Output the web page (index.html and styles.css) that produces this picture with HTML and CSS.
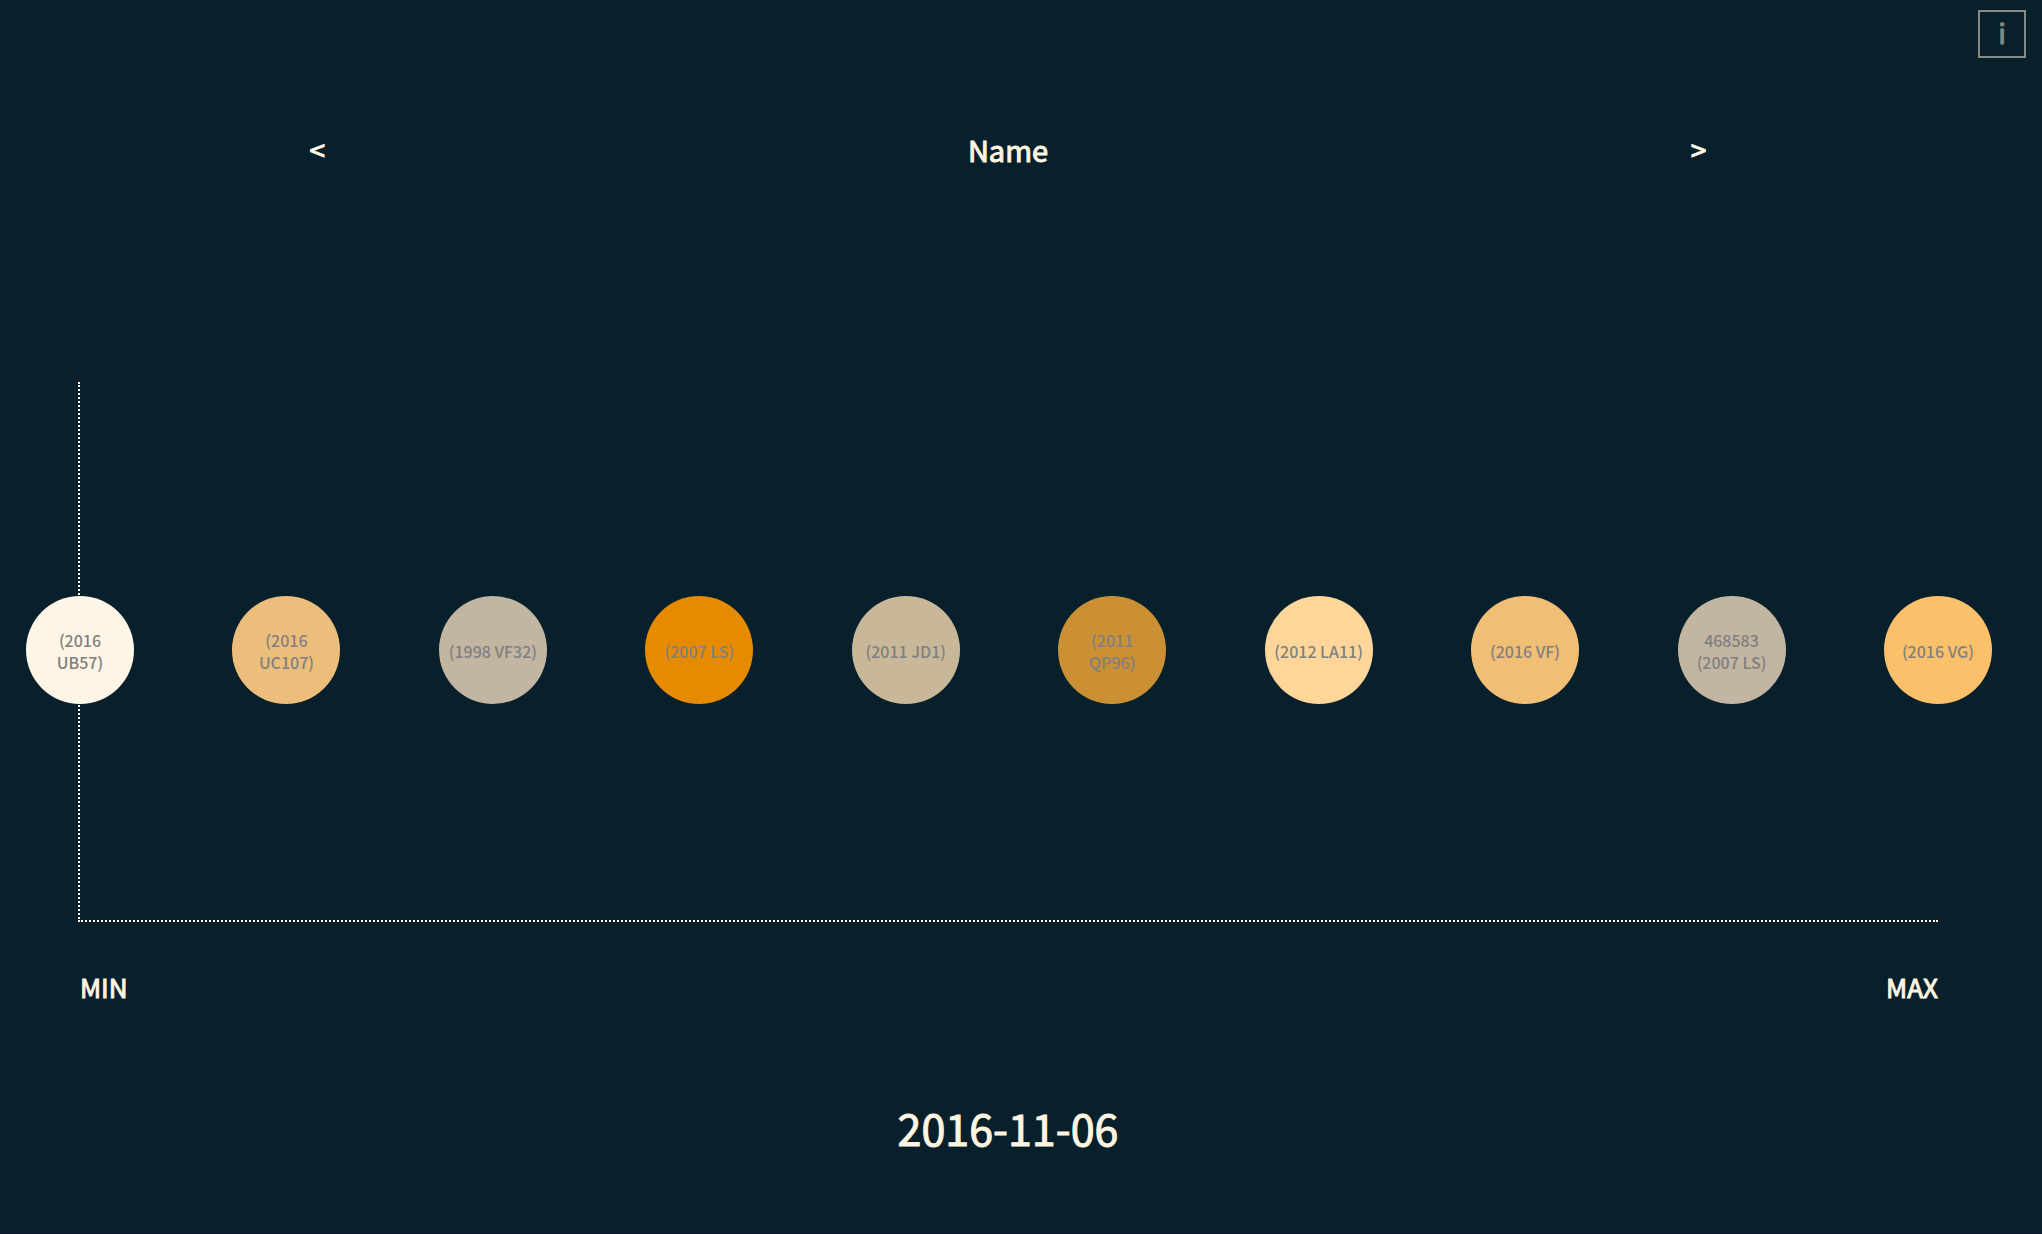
FILE: index.html
```html
<!DOCTYPE html>
<html lang="en">
<head>
<meta charset="utf-8">
<title>Near-Earth asteroids</title>
<link rel="stylesheet" href="styles.css">
</head>
<body>
<header class="topbar">
  <button class="info" type="button">i</button>
</header>
<main class="page">
  <nav class="sorter">
    <button class="arrow" type="button">&lt;</button>
    <h1 class="sorter-title">Name</h1>
    <button class="arrow" type="button">&gt;</button>
  </nav>
  <section class="chart">
    <div class="plot">
      <ul class="asteroids">
        <li class="asteroid cream"><span>(2016 UB57)</span></li>
        <li class="asteroid sand"><span>(2016 UC107)</span></li>
        <li class="asteroid stone"><span>(1998 VF32)</span></li>
        <li class="asteroid orange"><span>(2007 LS)</span></li>
        <li class="asteroid khaki"><span>(2011 JD1)</span></li>
        <li class="asteroid bronze"><span>(2011 QP96)</span></li>
        <li class="asteroid peach"><span>(2012 LA11)</span></li>
        <li class="asteroid honey"><span>(2016 VF)</span></li>
        <li class="asteroid stone"><span>468583 (2007 LS)</span></li>
        <li class="asteroid amber"><span>(2016 VG)</span></li>
      </ul>
    </div>
    <div class="scale"><span>MIN</span><span>MAX</span></div>
  </section>
  <time class="date" datetime="2016-11-06">2016-11-06</time>
</main>
</body>
</html>
```

FILE: styles.css
```css
* {
  box-sizing: border-box;
}

body {
  margin: 0;
  min-height: 100vh;
  background: #08202c;
  border-bottom: 1px solid #07142a;
  color: #fff5e1;
  font-family: "Noto Sans CJK SC", "Noto Sans", sans-serif;
  font-weight: 400;
  -webkit-text-stroke: 1px currentColor;
}

button {
  padding: 0;
  border: 0;
  background: none;
  color: inherit;
  font: inherit;
  cursor: pointer;
}

.topbar {
  display: flex;
  justify-content: flex-end;
  padding: 10px 16px 0;
}

.info {
  width: 48px;
  height: 48px;
  border: 2px solid #848b87;
  color: #848b87;
  font-size: 28px;
  line-height: 36px;
  padding-bottom: 4px;
}

.page {
  display: flex;
  flex-direction: column;
  margin-right: 26px;
}

.sorter {
  display: flex;
  justify-content: space-between;
  align-items: center;
  margin-top: 71px;
  padding: 0 15%;
  line-height: 40px;
}

.sorter-title {
  margin: 0;
  font-size: 29px;
  font-weight: 400;
}

.arrow {
  width: 30px;
  font-size: 28px;
}

.chart {
  margin: 213px 78px 0;
}

.plot {
  display: flex;
  align-items: center;
  height: 540px;
  padding-bottom: 2px;
  border-left: 2px dotted #fff5e1;
  border-bottom: 2px dotted #fff5e1;
}

/* The first and last circles are centred on the ends of the axis. */
.asteroids {
  display: flex;
  flex: 1;
  justify-content: space-between;
  margin: 0 -54px;
  padding: 0;
  list-style: none;
}

.asteroid {
  display: flex;
  align-items: center;
  justify-content: center;
  width: 108px;
  height: 108px;
  padding: 2px 8px 0;
  border-radius: 50%;
  color: #808080;
  font-size: 16px;
  line-height: 22px;
  text-align: center;
  -webkit-text-stroke-width: 0;
  font-weight: 500;
}

.cream { background: #fff5e6; }
.sand { background: #ecbe7b; }
.stone { background: #c2b5a2; }
.orange { background: #e68a00; }
.khaki { background: #c8b799; }
.bronze { background: #cb8f34; }
.peach { background: #ffd699; }
.honey { background: #f0be75; }
.amber { background: #fac06a; }

.scale {
  display: flex;
  justify-content: space-between;
  margin-top: 45px;
  padding-left: 2px;
  font-size: 26px;
  line-height: 40px;
}

.date {
  margin-top: 88px;
  font-size: 43px;
  line-height: 64px;
  text-align: center;
}
```
